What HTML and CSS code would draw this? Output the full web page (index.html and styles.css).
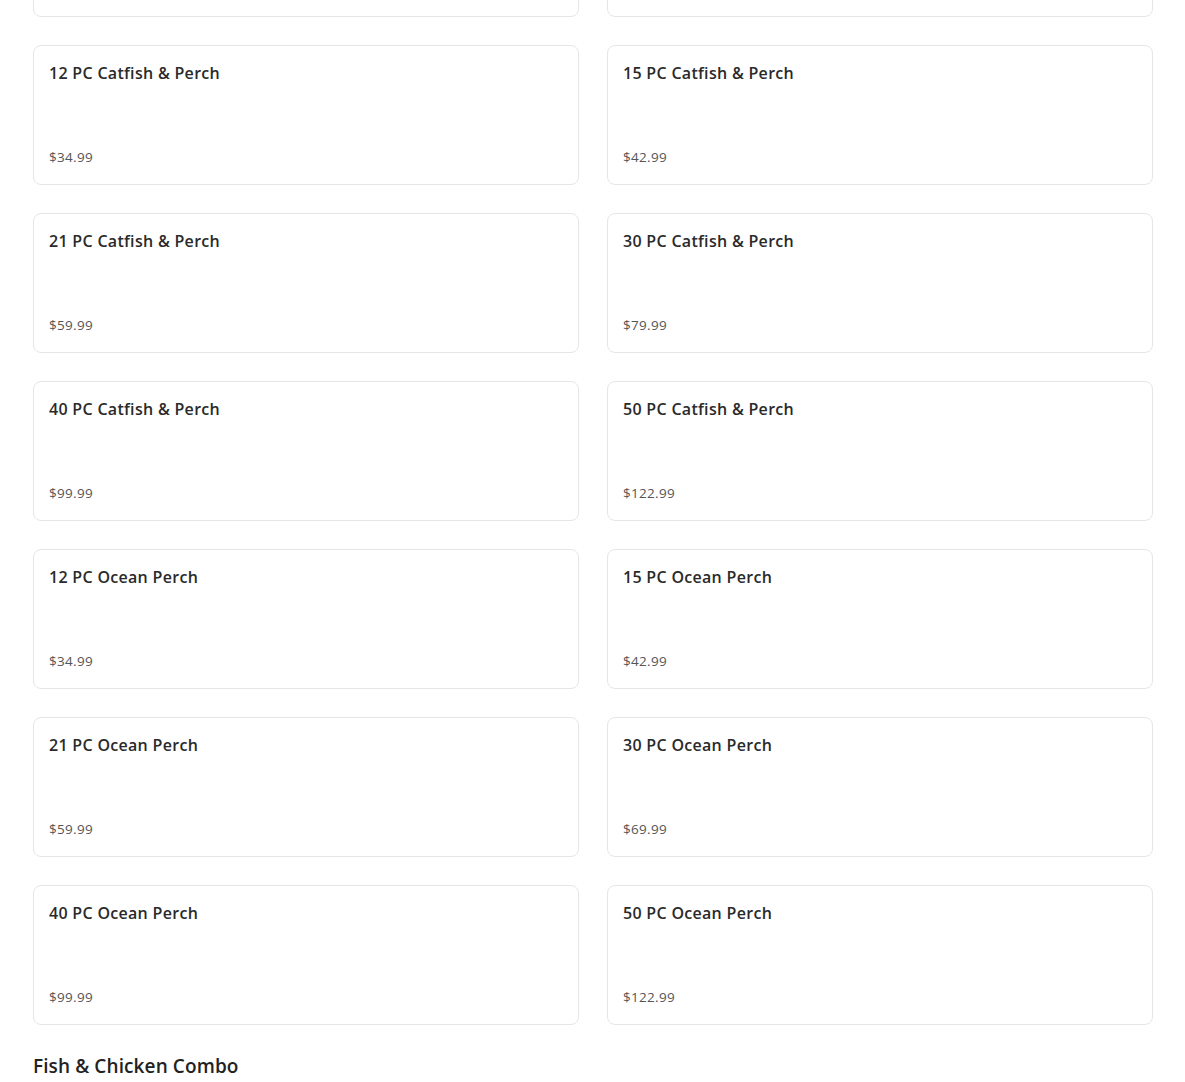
FILE: index.html
```html
<!DOCTYPE html>
<html>
<head>
<meta charset="utf-8">
<link rel="stylesheet" href="styles.css">
</head>
<body>
<main class="menu">
  <section class="grid">
    <div class="card"><div class="title">9 PC Catfish &amp; Perch</div><div class="price">$26.99</div></div>
    <div class="card"><div class="title">10 PC Catfish &amp; Perch</div><div class="price">$29.99</div></div>
    <div class="card"><div class="title">12 PC Catfish &amp; Perch</div><div class="price">$34.99</div></div>
    <div class="card"><div class="title">15 PC Catfish &amp; Perch</div><div class="price">$42.99</div></div>
    <div class="card"><div class="title">21 PC Catfish &amp; Perch</div><div class="price">$59.99</div></div>
    <div class="card"><div class="title">30 PC Catfish &amp; Perch</div><div class="price">$79.99</div></div>
    <div class="card"><div class="title">40 PC Catfish &amp; Perch</div><div class="price">$99.99</div></div>
    <div class="card"><div class="title">50 PC Catfish &amp; Perch</div><div class="price">$122.99</div></div>
    <div class="card"><div class="title">12 PC Ocean Perch</div><div class="price">$34.99</div></div>
    <div class="card"><div class="title">15 PC Ocean Perch</div><div class="price">$42.99</div></div>
    <div class="card"><div class="title">21 PC Ocean Perch</div><div class="price">$59.99</div></div>
    <div class="card"><div class="title">30 PC Ocean Perch</div><div class="price">$69.99</div></div>
    <div class="card"><div class="title">40 PC Ocean Perch</div><div class="price">$99.99</div></div>
    <div class="card"><div class="title">50 PC Ocean Perch</div><div class="price">$122.99</div></div>
  </section>
  <h2 class="section-title">Fish &amp; Chicken Combo</h2>
</main>
</body>
</html>
```
FILE: styles.css
```css
html, body {
  margin: 0;
  padding: 0;
  background: #ffffff;
}
body {
  font-family: "Open Sans", "Liberation Sans", sans-serif;
  color: #222222;
}
.menu {
  width: 1120px;
  padding-left: 33px;
  margin-top: -123px;
}
.grid {
  display: grid;
  grid-template-columns: 1fr 1fr;
  column-gap: 28px;
  row-gap: 28px;
}
.card {
  box-sizing: border-box;
  height: 140px;
  border: 1px solid #e6e6e6;
  border-radius: 8px;
  padding: 15px 15px 17px 15px;
  display: flex;
  flex-direction: column;
  justify-content: space-between;
}
.title {
  font-size: 16px;
  line-height: 24px;
  font-weight: 600;
  letter-spacing: 0.3px;
  color: #2a2a2a;
}
.price {
  font-size: 13.5px;
  line-height: 20px;
  font-weight: 400;
  letter-spacing: 0.3px;
  color: #555555;
}
.section-title {
  margin: 28px 0 0 0;
  font-size: 19px;
  line-height: 26px;
  font-weight: 600;
  letter-spacing: 0.1px;
  color: #222222;
}
```
